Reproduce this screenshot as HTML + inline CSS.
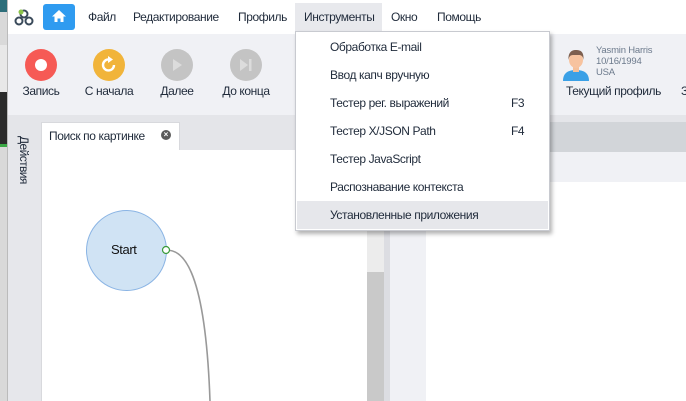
<!DOCTYPE html>
<html><head><meta charset="utf-8"><style>
*{margin:0;padding:0;box-sizing:border-box}
body{width:686px;height:401px;overflow:hidden;position:relative;font-family:"Liberation Sans","DejaVu Sans",sans-serif;font-size:12px;letter-spacing:-0.4px;color:#1f2a3a;background:#fff}
.a{position:absolute}
.t{position:absolute;white-space:nowrap}
.circ{position:absolute;width:32px;height:32px;border-radius:50%}
.lbl{position:absolute;top:84px;font-size:12px;white-space:nowrap;transform:translateX(-50%)}
.mi{position:absolute;left:330px;font-size:12px;white-space:nowrap;color:#1f2a3a}
</style></head><body>
<div class="a" style="left:0;top:0;width:7px;height:401px;background:#d9d9d9"></div>
<div class="a" style="left:0;top:0;width:7px;height:12px;background:#2d6e7a"></div>
<div class="a" style="left:0;top:45px;width:7px;height:47px;background:#e8e8e8"></div>
<div class="a" style="left:0;top:92px;width:7px;height:53px;background:#2b2b2b"></div>
<div class="a" style="left:0;top:144px;width:7px;height:3px;background:#3aa845"></div>
<div class="a" style="left:7px;top:0;width:1px;height:401px;background:#bbb"></div>
<div class="a" style="left:8px;top:0;width:678px;height:34px;background:#fff"></div>
<svg class="a" style="left:14px;top:9px" width="20" height="18" viewBox="0 0 20 18"><circle cx="10" cy="5" r="3.5" fill="none" stroke="#3a4a5a" stroke-width="2"/><circle cx="5" cy="12" r="3.5" fill="none" stroke="#3a4a5a" stroke-width="2"/><circle cx="15" cy="12" r="3.5" fill="none" stroke="#3a4a5a" stroke-width="2"/><circle cx="7" cy="3" r="2.5" fill="#8bc34a"/></svg>
<div class="a" style="left:43px;top:4px;width:32px;height:26px;background:#2f9bf0;border-radius:3px"></div>
<svg class="a" style="left:51px;top:9px" width="16" height="14" viewBox="0 0 16 14"><path d="M8 1 L1 7.5 H3.5 V13 H6.5 V9.5 H9.5 V13 H12.5 V7.5 H15 Z" fill="#fff"/></svg>
<div class="t" style="left:88px;top:10px">Файл</div>
<div class="t" style="left:133px;top:10px">Редактирование</div>
<div class="t" style="left:238px;top:10px">Профиль</div>
<div class="a" style="left:295px;top:3px;width:87px;height:28px;background:#e8e9ed"></div>
<div class="t" style="left:304px;top:10px">Инструменты</div>
<div class="t" style="left:391px;top:10px">Окно</div>
<div class="t" style="left:437px;top:10px">Помощь</div>
<div class="a" style="left:8px;top:34px;width:678px;height:81px;background:#f0f1f5"></div>
<div class="circ" style="left:25px;top:49px;background:#f65a55"></div>
<div class="a" style="left:35px;top:59px;width:12px;height:12px;border-radius:50%;background:#fff"></div>
<div class="circ" style="left:93px;top:49px;background:#f1b43a"></div>
<svg class="a" style="left:99px;top:55px" width="20" height="20" viewBox="0 0 20 20"><path d="M15 10 A5.5 5.5 0 1 1 10 4.5" fill="none" stroke="#fff" stroke-width="2.4"/><path d="M9 1 L14 4.5 L9 8 Z" fill="#fff"/></svg>
<div class="circ" style="left:161px;top:49px;background:#c4c4c4"></div>
<svg class="a" style="left:171px;top:58px" width="12" height="14"><path d="M2 1 L11 7 L2 13 Z" fill="#dcdcdc"/></svg>
<div class="circ" style="left:230px;top:49px;background:#c4c4c4"></div>
<svg class="a" style="left:238px;top:58px" width="16" height="14"><path d="M2 1 L10 7 L2 13 Z" fill="#dcdcdc"/><rect x="11" y="1" width="2.5" height="12" fill="#dcdcdc"/></svg>
<div class="lbl" style="left:41px">Запись</div>
<div class="lbl" style="left:109px">С начала</div>
<div class="lbl" style="left:177px">Далее</div>
<div class="lbl" style="left:246px">До конца</div>
<svg class="a" style="left:561px;top:47px" width="30" height="34" viewBox="0 0 30 34"><path d="M2 34 C2 26 7 23 15 23 C23 23 28 26 28 34Z" fill="#3aa0e6"/><rect x="12" y="18" width="6" height="7" fill="#f5c09a"/><ellipse cx="15" cy="13" rx="7" ry="8" fill="#f7c39f"/><path d="M7.5 13 C7 4 12 3 15 3 C20 3 23 5 22.5 13 C22 9 20 8 18 8 L12 8 C9 8 8 10 7.5 13Z" fill="#7d5f4f"/></svg>
<div class="t" style="left:596px;top:45px;font-size:9.5px;color:#6c7a8c;line-height:11px;letter-spacing:-0.2px">Yasmin Harris<br>10/16/1994<br>USA</div>
<div class="t" style="left:566px;top:84px">Текущий профиль</div>
<div class="t" style="left:681px;top:84px">З</div>
<div class="a" style="left:8px;top:115px;width:678px;height:35px;background:#e4e5e9"></div>
<div class="a" style="left:8px;top:150px;width:33px;height:251px;background:#e6e7eb"></div>
<div class="t" style="left:17px;top:136px;writing-mode:vertical-rl;font-size:12px;letter-spacing:-0.6px">Действия</div>
<div class="a" style="left:41px;top:122px;width:139px;height:30px;background:#fff;border:1px solid #d8d9dd;border-bottom:none"></div>
<div class="t" style="left:49px;top:129px">Поиск по картинке</div>
<div class="a" style="left:161px;top:130px;width:10px;height:10px;border-radius:50%;background:#5a5a5a;color:#fff;font-size:8px;line-height:10px;text-align:center;font-weight:bold;letter-spacing:0">×</div>
<div class="a" style="left:41px;top:150px;width:326px;height:251px;background:#fff;border-left:1px solid #d8d9dd"></div>
<div class="a" style="left:86px;top:210px;width:81px;height:81px;border-radius:50%;background:#d0e3f4;border:1px solid #8ab4e4"></div>
<div class="t" style="left:111px;top:242px;font-size:13px;color:#111">Start</div>
<svg class="a" style="left:160px;top:240px" width="60" height="161"><path d="M6 10 C20 10 45 20 50 161" fill="none" stroke="#999" stroke-width="1.6"/><circle cx="6" cy="10" r="3.5" fill="#fff" stroke="#3a9a3a" stroke-width="1.2"/></svg>
<div class="a" style="left:367px;top:150px;width:17px;height:251px;background:#ececec"></div>
<div class="a" style="left:367px;top:272px;width:17px;height:129px;background:#c9c9c9"></div>
<div class="a" style="left:384px;top:150px;width:6px;height:251px;background:#dcdde2"></div>
<div class="a" style="left:390px;top:122px;width:296px;height:30px;background:#d2d5d9"></div>
<div class="a" style="left:390px;top:152px;width:296px;height:30px;background:#f0f1f5"></div>
<div class="a" style="left:390px;top:182px;width:36px;height:219px;background:#f0f1f5"></div>
<div class="a" style="left:426px;top:182px;width:260px;height:219px;background:#fff"></div>
<div class="a" style="left:295px;top:31px;width:255px;height:200px;background:#fff;border:1px solid #c8cad0;box-shadow:2px 3px 4px rgba(0,0,0,.3)"></div>
<div class="a" style="left:297px;top:201px;width:251px;height:28px;background:#e6e7eb"></div>
<div class="mi" style="top:40px">Обработка E-mail</div>
<div class="mi" style="top:68px">Ввод капч вручную</div>
<div class="mi" style="top:96px">Тестер рег. выражений</div>
<div class="t" style="left:511px;top:96px">F3</div>
<div class="mi" style="top:124px">Тестер X/JSON Path</div>
<div class="t" style="left:511px;top:124px">F4</div>
<div class="mi" style="top:152px">Тестер JavaScript</div>
<div class="mi" style="top:180px">Распознавание контекста</div>
<div class="mi" style="top:208px">Установленные приложения</div>
</body></html>
